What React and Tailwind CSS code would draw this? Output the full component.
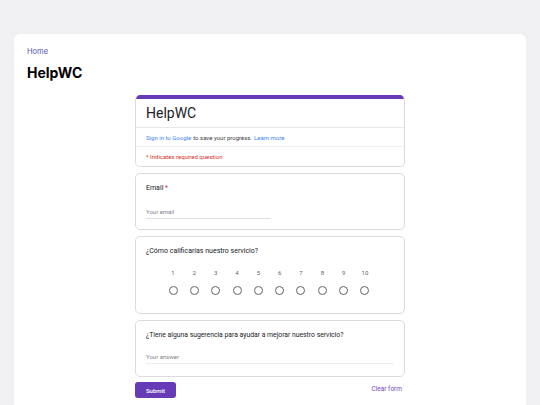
export default function App() {
  const scale = [1, 2, 3, 4, 5, 6, 7, 8, 9, 10];

  return (
    <div className="min-h-[405px] bg-[#f0f0f2] px-[14px] pt-[34px] font-['Inter',sans-serif]">
      <div className="rounded-t-[6px] bg-white px-[13px] pt-[12px] pb-[40px]">
        <a className="block text-[7.5px] leading-[12px] text-[#4f52b8]">Home</a>
        <h1 className="mt-[6px] text-[14px] font-bold leading-[18px] text-black">HelpWC</h1>

        <div className="mx-auto mt-[13px] w-[270px] font-['Roboto',sans-serif]">
          <div className="overflow-hidden rounded-[5px] border border-[#dadce0] border-t-0 bg-white">
            <div className="h-[4px] bg-[#673ab7]" />
            <div className="flex h-[29px] items-center border-b border-[#e8e8e8] px-[10px]">
              <span className="text-[14px] leading-[18px] text-[#202124]">HelpWC</span>
            </div>
            <div className="flex h-[19px] items-center border-b border-[#eeeeee] px-[10px] text-[6px] text-[#3c4043]">
              <span className="text-[#4285f4]">Sign in to Google</span>
              <span className="ml-[2px]">to save your progress.</span>
              <span className="ml-[2px] text-[#4285f4]">Learn more</span>
            </div>
            <div className="flex h-[19px] items-center px-[10px] text-[6px] text-[#d93025]">
              * Indicates required question
            </div>
          </div>

          <div className="mt-[6px] h-[57px] rounded-[5px] border border-[#dadce0] bg-white px-[10px] pt-[9px]">
            <p className="text-[7px] leading-[10px] text-[#202124]">
              Email <span className="text-[#d93025]">*</span>
            </p>
            <div className="mt-[14px] w-[125px] border-b border-[#e0e0e0] pb-[2px] text-[6px] leading-[9px] text-[#80868b]">
              Your email
            </div>
          </div>

          <div className="mt-[6px] h-[78px] rounded-[5px] border border-[#dadce0] bg-white px-[10px] pt-[9px]">
            <p className="text-[7px] leading-[10px] text-[#202124]">¿Cómo calificarías nuestro servicio?</p>
            <div className="mt-[13px] flex justify-center gap-[11.33px] pr-[2px]">
              {scale.map((n) => (
                <div key={n} className="flex w-[10px] flex-col items-center">
                  <span className="text-[6px] leading-[8px] text-[#5f6368]">{n}</span>
                  <span className="mt-[9px] h-[9px] w-[9px] rounded-full border border-[#5f6368]" />
                </div>
              ))}
            </div>
          </div>

          <div className="mt-[6px] h-[57px] rounded-[5px] border border-[#dadce0] bg-white px-[10px] pt-[9px]">
            <p className="text-[6.8px] leading-[10px] text-[#202124]">
              ¿Tiene alguna sugerencia para ayudar a mejorar nuestro servicio?
            </p>
            <div className="mt-[12px] border-b border-[#eeeeee] pb-[2px] text-[6px] leading-[9px] text-[#80868b]">
              Your answer
            </div>
          </div>

          <div className="mt-[5px] flex items-center justify-between">
            <button className="h-[16px] w-[41px] rounded-[3px] bg-[#673ab7] text-[6px] font-medium text-white">
              Submit
            </button>
            <span className="pr-[3px] text-[6.5px] text-[#7248b9]">Clear form</span>
          </div>
        </div>
      </div>
    </div>
  );
}
